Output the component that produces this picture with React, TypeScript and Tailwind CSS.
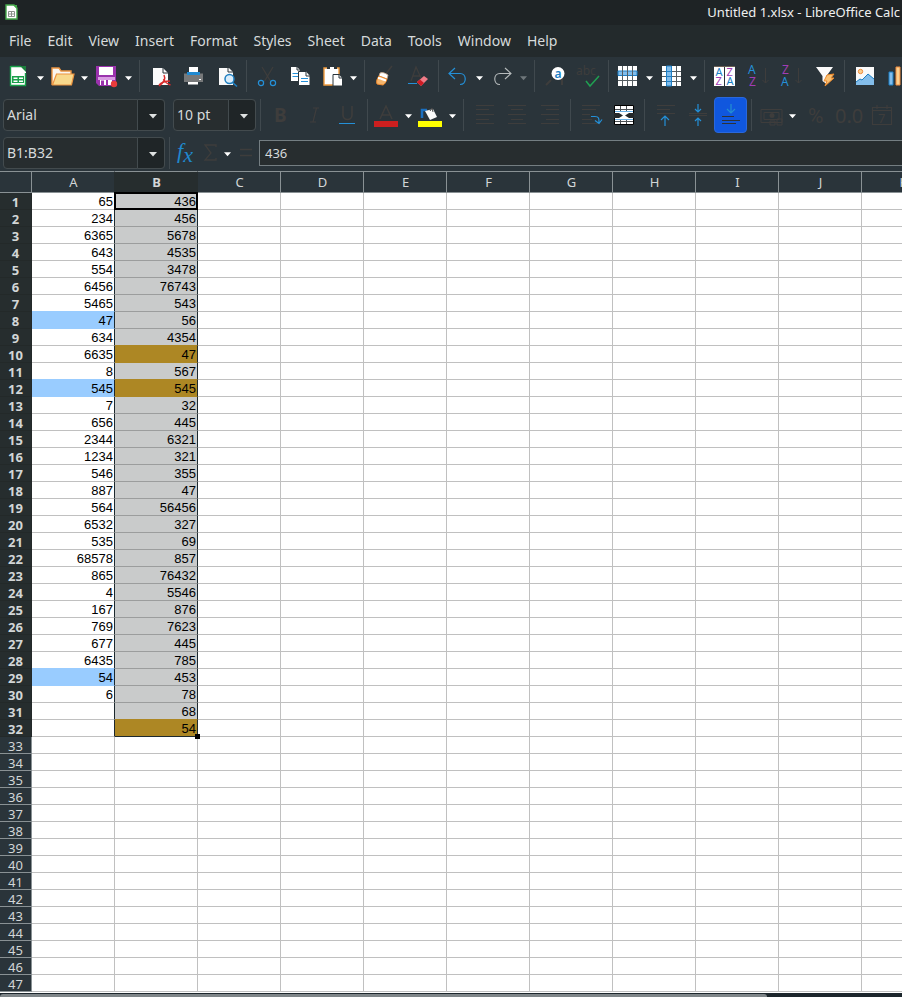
import type { ReactNode } from "react";

const columnA = [
  65, 234, 6365, 643, 554, 6456, 5465, 47, 634, 6635, 8, 545, 7, 656, 2344, 1234, 546, 887, 564, 6532, 535, 68578, 865,
  4, 167, 769, 677, 6435, 54, 6,
];
const columnB = [
  436, 456, 5678, 4535, 3478, 76743, 543, 56, 4354, 47, 567, 545, 32, 445, 6321, 321, 355, 47, 56456, 327, 69, 857,
  76432, 5546, 876, 7623, 445, 785, 453, 78, 68, 54,
];
const blueRows = [8, 12, 29];
const goldRows = [10, 12, 32];
const lastSelected = 32;

const columns = "ABCDEFGHIJK".split("");
const rows = Array.from({ length: 47 }, (_, i) => i + 1);
const menus = ["File", "Edit", "View", "Insert", "Format", "Styles", "Sheet", "Data", "Tools", "Window", "Help"];

const dim = "#3e3d3c";
const blue = "#2490d8";
const purple = "#a13db5";

/* ---------- toolbar parts ---------- */

function Tool({ label, active, children }: { label: string; active?: boolean; children: ReactNode }) {
  return (
    <button
      type="button"
      aria-label={label}
      className={`flex h-9 w-[33px] shrink-0 items-center justify-center rounded-sm ${
        active ? "border border-[#2a68dc] bg-[#1057de]" : ""
      }`}
    >
      <svg width="24" height="24" viewBox="0 0 24 24" fill="none" className="shrink-0 overflow-visible">
        {children}
      </svg>
    </button>
  );
}

function Triangle({ className }: { className: string }) {
  return (
    <svg width="8" height="5" viewBox="0 0 8 5" className={className}>
      <path d="M0 0h8L4 4.6z" fill="currentColor" />
    </svg>
  );
}

function Arrow({ label, muted }: { label: string; muted?: boolean }) {
  return (
    <button type="button" aria-label={label} className="flex h-9 w-[11px] shrink-0 items-center pt-1 pl-px">
      <Triangle className={`w-[7px] shrink-0 ${muted ? "text-[#6f777b]" : "text-white"}`} />
    </button>
  );
}

function Separator() {
  return (
    <div className="flex w-2 shrink-0 justify-center">
      <div className="h-8 w-px bg-[#40494e]" />
    </div>
  );
}

function DropArrow() {
  return (
    <span className="pointer-events-none absolute inset-y-0 right-0 flex w-7 items-center justify-center rounded-r border border-[#434b4e] bg-[#1f2527] pt-1 pl-1">
      <Triangle className="w-[10px] text-[#dfe2e2]" />
    </span>
  );
}

const fieldClass =
  "h-8 w-full appearance-none rounded border border-[#434b4e] bg-[#272d2f] pl-[3px] text-[14px] leading-5 text-[#d6dadb] outline-none";

/* ---------- icons ---------- */

const Lines = ({ paths }: { paths: string }) => <path d={paths} stroke={dim} />;

function StandardToolbar() {
  return (
    <div role="toolbar" aria-label="Standard" className="flex h-[38px] items-center overflow-hidden pl-[3px]">
      <Tool label="New">
        <path d="M2 2h12l4 5v15H2z" fill="#fff" />
        <path d="M2.500 2.500H13M2.500 2v19.500h15V9" stroke="#18a04a" strokeWidth="1.4" />
        <path d="M12 2h6v6z" fill="#1b7f3c" />
        <path d="M4 12h12v7H4z" fill="#18a04a" />
        <path d="M5.5 13.5h4v1.6h-4zM11 13.5h4v1.6h-4zM5.5 16.4h4V18h-4zM11 16.4h4V18h-4z" fill="#fff" />
      </Tool>
      <Arrow label="New options" />
      <Tool label="Open">
        <path d="M0 21V4h7l2 3h10v4" fill="#faf6ef" stroke="#ec9440" strokeWidth="1.4" />
        <path d="M.5 21 4.500 10H22l-2.500 11z" fill="#f8d98c" stroke="#ec9440" strokeWidth="1.2" />
      </Tool>
      <Arrow label="Open options" />
      <Tool label="Save">
        <path d="M0 2h20v20H3l-3-3z" fill="#9a32ad" />
        <path d="M3 3h14v8H3zM4 14h12v7H4z" fill="#fff" />
        <path d="M2 13h17v3H2z" fill="#d99be3" />
        <path d="M5 16h10v5H5z" fill="#fff" />
        <path d="M5 16.500h3V21H5zM10 16h2v5h-2z" fill="#9a32ad" />
        <circle cx="18" cy="20" r="3.200" fill="#e93c3c" />
      </Tool>
      <Arrow label="Save options" />
      <Separator />
      <Tool label="Export as PDF">
        <path d="M5 4h10l5 5v12H5z" fill="#fafafa" />
        <path d="M15 4v5h5" stroke="#2a343a" />
        <path d="M16 11c1.500 3 .5 7-5 11M15.500 15c1.500 3 4 5 7 6M11 21c3-3 7-4 11-4" stroke="#d92b2b" strokeWidth="1.5" />
      </Tool>
      <Tool label="Print">
        <path d="M8 3h9v5H8zM8 15h9v5H8z" fill="#fff" />
        <path d="M3 9.500h19V18H3z" fill="#77797a" />
        <path d="M6 8h13v3H6z" fill="#1f8ad2" />
        <path d="M7 18h10v2.500H7z" fill="#fff" />
        <path d="M18 15.500h2" stroke="#fff" />
      </Tool>
      <Tool label="Print Preview">
        <path d="M5 4h10l4 4v13H5z" fill="#fafafa" />
        <path d="M14 4v4h5" stroke="#2a343a" />
        <circle cx="15.500" cy="15" r="4.500" fill="#d9ecfa" stroke="#1f7fc0" strokeWidth="1.5" />
        <path d="m18.500 18.500 4.500 4" stroke="#1f7fc0" strokeWidth="1.6" />
      </Tool>
      <Separator />
      <Tool label="Cut">
        <path d="m7 3 9 15M18 3 9 18" stroke={dim} strokeWidth="1.3" />
        <circle cx="6" cy="19" r="2.600" stroke={blue} strokeWidth="1.2" />
        <circle cx="18" cy="19" r="2.600" stroke={blue} strokeWidth="1.2" />
      </Tool>
      <Tool label="Copy">
        <path d="M3 3h6l3 3v11H3z" fill="#fff" />
        <path d="M9 3v3h3" stroke="#2a343a" />
        <path d="M4.500 9.500h6M4.500 12.500h6" stroke={blue} />
        <path d="M10.500 7.500h8l3.500 4v10H10.500z" fill="#fff" stroke="#2a343a" />
        <path d="M18 8v4h4" stroke="#2a343a" />
        <path d="M13 14.500h7M13 17.500h7" stroke={blue} />
      </Tool>
      <Tool label="Paste">
        <path d="M3 4h15v17H3z" fill="#fff" stroke="#ef9b3e" strokeWidth="1.4" />
        <path d="M6 3h9v4H6z" fill="#fff" />
        <path d="M6 3h3v2H6zM13 3h3v2h-3z" fill="#2a343a" />
        <path d="M12 10.500h6.500l3 3.500v8H12z" fill="#fff" stroke="#2a343a" />
        <path d="M18 10.500V14h3.500" stroke="#2a343a" />
      </Tool>
      <Arrow label="Paste options" />
      <Separator />
      <Tool label="Clone Formatting">
        <path d="m12 11 7-9" stroke={dim} strokeWidth="1.500" />
        <path d="M7 9c3-1 5 0 8 2l-1 4-8-3z" fill="#fff" stroke="#c7a78b" strokeWidth=".8" />
        <path d="M6 12c3 1 5 2 8 3-1 3-2 5-4 6l-6-1c-1-3 0-5 2-8z" fill="#f5b56b" stroke="#f08c30" />
        <path d="M5 14c3 0 5 2 8 2.500" stroke="#fff" strokeWidth="2" />
      </Tool>
      <Tool label="Clear Direct Formatting">
        <path d="m5 17 5-14 5 11M7 12h7" stroke={dim} strokeWidth="1.3" />
        <path d="M2 19.500h9" stroke={blue} />
        <path d="m11 18 7-6 4 3-7 7z" fill="#f07b87" />
        <path d="m11 18 3-2.500 4 3.500-3 3z" fill="#cf1c24" />
      </Tool>
      <Separator />
      <Tool label="Undo">
        <path d="m8 4-6 5.500 6 5.500M2 9.500h11c7 0 7 11 0 11" stroke={blue} strokeWidth="1.2" />
      </Tool>
      <Arrow label="Undo options" />
      <Tool label="Redo">
        <path d="m14 4 6 5.500-6 5.500M20 9.500H9c-7 0-7 11 0 11" stroke="#b7bcbd" strokeWidth="1.1" />
      </Tool>
      <Arrow label="Redo options" muted />
      <Separator />
      <Tool label="Find and Replace">
        <path d="m8 16-5 5M19 14v7" stroke={dim} strokeWidth="2" />
        <circle cx="15" cy="9.500" r="6.500" fill="#fff" />
        <text x="11.500" y="13.500" fontSize="12" fill="#1b7fc4" fontFamily="Noto Sans" fontWeight="600">a</text>
      </Tool>
      <Tool label="Spelling">
        <text x="0" y="11" fontSize="12" fill={dim} fontFamily="Noto Sans">abc</text>
        <path d="m10 17 4 5 9-10" stroke="#20a052" strokeWidth="1.500" />
      </Tool>
      <Separator />
      <Tool label="Row">
        <path d="M1 2h19v20H1z" fill="#fff" />
        <path d="M1 7h19v4.500H1z" fill="#83bdea" stroke="#1f80c6" />
        <path d="M5.500 2v20M10.500 2v20M15.500 2v20M1 16.500h19" stroke="#555d61" />
      </Tool>
      <Arrow label="Row options" />
      <Tool label="Column">
        <path d="M1 2h19v20H1z" fill="#fff" />
        <path d="M1 7.500h19M1 12.500h19M1 17.500h19M15.500 2v20" stroke="#555d61" />
        <path d="M5.500 2h5v20h-5z" fill="#83bdea" stroke="#1f80c6" />
        <path d="M5.500 7.500h5M5.500 12.500h5M5.500 17.500h5" stroke="#1f80c6" />
      </Tool>
      <Arrow label="Column options" />
      <Separator />
      <Tool label="Sort">
        <path d="M1 3h10v19H1zM12 3h10v19H12z" fill="#fff" />
        <path d="M1 2.500h21" stroke="#6b5f55" />
        <g fontSize="11" fontFamily="Noto Sans">
          <text x="2.500" y="12" fill="#1b7fc4">A</text>
          <text x="2.500" y="21" fill={purple}>Z</text>
          <text x="13.500" y="12" fill={purple}>Z</text>
          <text x="13.500" y="21" fill="#1b7fc4">A</text>
        </g>
      </Tool>
      <Tool label="Sort Ascending">
        <text x="2" y="10" fontSize="12" fill={blue} fontFamily="Noto Sans">A</text>
        <text x="3" y="22" fontSize="12" fill={purple} fontFamily="Noto Sans">Z</text>
        <path d="M19.500 4v15m-3-3 3 3 3-3" stroke={dim} />
      </Tool>
      <Tool label="Sort Descending">
        <text x="3" y="10" fontSize="12" fill={purple} fontFamily="Noto Sans">Z</text>
        <text x="2" y="22" fontSize="12" fill={blue} fontFamily="Noto Sans">A</text>
        <path d="M19.500 4v15m-3-3 3 3 3-3" stroke={dim} />
      </Tool>
      <Tool label="AutoFilter">
        <path d="M4 3h17l-6.500 9v8l-4-3v-5z" fill="#fafafa" />
        <path d="m15 11 7-1-3 4h3l-9 8 2-5h-3z" fill="#f9c072" stroke="#ee8a2b" />
      </Tool>
      <Separator />
      <Tool label="Insert Image">
        <path d="M3 3h18v18H3z" fill="#fafafa" />
        <circle cx="7.500" cy="7.500" r="2.200" fill="#fbd08f" stroke="#ee8a3c" />
        <path d="M3 21v-3l4-3 2 1 6-6 6 5v6z" fill="#83bdea" />
        <path d="m3 18 4-3 2 1 6-6 6 5" stroke="#1b7fc4" />
      </Tool>
      <Tool label="Insert Chart">
        <path d="M3 8h4v13H3z" fill="#83bdea" stroke="#1b7fc4" />
        <path d="M10 3h4v18h-4z" fill="#fbd08f" stroke="#ee8a3c" />
        <path d="M17 11h4v10h-4z" fill="#9bd3a8" stroke="#18a04a" />
      </Tool>
    </div>
  );
}

function FormattingToolbar() {
  return (
    <div role="toolbar" aria-label="Formatting" className="flex h-[39px] items-center overflow-hidden pl-[3px]">
      <div className="relative mr-2 w-[162px] shrink-0">
        <select aria-label="Font Name" className={fieldClass}>
          <option>Arial</option>
        </select>
        <DropArrow />
      </div>
      <div className="relative w-[83px] shrink-0">
        <select aria-label="Font Size" className={fieldClass}>
          <option>10 pt</option>
        </select>
        <DropArrow />
      </div>
      <Separator />
      <Tool label="Bold">
        <text x="5" y="19" fontSize="19" fontWeight="700" fill={dim} fontFamily="Noto Sans">B</text>
      </Tool>
      <Tool label="Italic">
        <path d="M11 5h6M8 19h6M14.500 5 11 19" stroke={dim} strokeWidth="1.2" />
      </Tool>
      <Tool label="Underline">
        <path d="M8 3v9c0 6 9 6 9 0V3" stroke={dim} strokeWidth="1.600" />
        <path d="M4 20.500h16" stroke={blue} />
      </Tool>
      <Separator />
      <Tool label="Font Color">
        <path d="m4 16 6-13 6 13M6 12h8" stroke={dim} strokeWidth="1.500" />
        <path d="M-2 18h24v6H-2z" fill="#cc1f1f" />
      </Tool>
      <Arrow label="Font Color options" />
      <Tool label="Background Color">
        <path d="M2 15V7h5" stroke="#1b6fc0" strokeWidth="2.500" />
        <path d="m5 8 8-2 4 8-7 3z" fill="#fafafa" />
        <path d="m10 8 2-3 1 4" stroke="#4a4a4a" />
        <path d="M-2 18h24v6H-2z" fill="#ffff00" />
      </Tool>
      <Arrow label="Background Color options" />
      <Separator />
      <Tool label="Align Left">
        <Lines paths="M4 2.500h18M4 6.500h13M4 11.500h18M4 16.500h13M4 20.500h18" />
      </Tool>
      <Tool label="Center">
        <Lines paths="M3 2.500h18M6 6.500h12M3 11.500h18M6 16.500h12M3 20.500h18" />
      </Tool>
      <Tool label="Align Right">
        <Lines paths="M3 2.500h18M8 6.500h13M3 11.500h18M8 16.500h13M3 20.500h18" />
      </Tool>
      <Separator />
      <Tool label="Wrap Text">
        <Lines paths="M3 2.500h18M3 6.500h14M3 11.500h8M3 16.500h10M3 20.500h18" />
        <path d="M12 13.500h4c4 0 4 2 4 6m-4-2 4 3 3-4" stroke={blue} strokeWidth="1.2" />
      </Tool>
      <Tool label="Merge Cells">
        <path d="M2.500 2.500h19v19h-19z" fill="#fff" stroke="#000" />
        <path d="M3 6.500h18M3 18.500h18M8.500 3v5M14.500 3v5M8.500 17v4M14.500 17v4" stroke="#4c5154" />
        <path d="M3 8.500h18v8H3z" fill="#fff" />
        <path d="M3 8.500h18M3 16.500h18" stroke="#6ab0e6" />
        <path d="M2 10h5l4 2.500L7 15H2zM22 10h-5l-4 2.500 4 2.500h5z" fill="#25292b" />
      </Tool>
      <Separator />
      <Tool label="Align Top">
        <Lines paths="M4 2.500h18M4 6.500h13M4 10.500h18" />
        <path d="M12 23V13m-4 4 4-4 4 4" stroke={blue} strokeWidth="1.2" />
      </Tool>
      <Tool label="Center Vertically">
        <Lines paths="M3 10.500h18M3 12.500h18" />
        <path d="M12 1v8m-3-3 3 3 3-3M12 23v-8m-3 3 3-3 3 3" stroke={blue} strokeWidth="1.2" />
      </Tool>
      <Tool label="Align Bottom" active>
        <path d="M12 1v9m-4-4 4 4 4-4" stroke="#248fd0" strokeWidth="1.2" />
        <path d="M3 13.500h12M3 17.500h18M3 20.500h14" stroke="#2c3238" />
      </Tool>
      <Separator />
      <Tool label="Format as Currency">
        <path d="M1 6.500h21v13H1zM4 9.500h15v7H4z" stroke={dim} />
        <circle cx="12" cy="12.500" r="2.500" fill={dim} />
        <path d="M10 18h5v4h-5zM17 16h5v6h-5z" stroke={dim} />
      </Tool>
      <Arrow label="Currency options" />
      <Tool label="Format as Percent">
        <text x="4" y="20" fontSize="21" fill={dim} fontFamily="Roboto">%</text>
      </Tool>
      <Tool label="Format as Number">
        <text x="-2" y="20" fontSize="20" fill={dim} fontFamily="Noto Sans">0.0</text>
      </Tool>
      <Tool label="Format as Date">
        <path d="M2.500 4.500h19v17h-19zM2 7.500h20M7 2v4M17 2v4" stroke={dim} strokeWidth="1.200" />
        <text x="8" y="19.500" fontSize="13" fill={dim} fontFamily="Noto Sans">7</text>
      </Tool>
    </div>
  );
}

function FormulaBar() {
  return (
    <div className="flex h-[37px] items-center overflow-hidden pl-[3px]">
      <div className="relative w-[162px] shrink-0">
        <input aria-label="Name Box" defaultValue="B1:B32" className={fieldClass} />
        <DropArrow />
      </div>
      <Separator />
      <button
        type="button"
        aria-label="Function Wizard"
        className="flex h-8 w-6 shrink-0 justify-center font-['Liberation_Serif',serif] text-[22px] leading-7 text-[#2088cc] italic"
      >
        f<span className="pt-1">x</span>
      </button>
      <button type="button" aria-label="Select Function" className="h-8 w-[26px] shrink-0 pl-1">
        <svg width="22" height="24" viewBox="0 0 22 24" fill="none">
          <path d="M15 6V4H4l6 8-6 7h11v-2" stroke={dim} strokeWidth="1.300" />
        </svg>
      </button>
      <Arrow label="Select Function options" />
      <button type="button" aria-label="Formula" className="h-8 w-[25px] shrink-0">
        <svg width="24" height="24" viewBox="0 0 24 24" fill="none">
          <path d="M6 8.500h12M6 14.500h12" stroke={dim} strokeWidth="1.600" />
        </svg>
      </button>
      <input
        aria-label="Input line"
        defaultValue="436"
        className="h-[26px] min-w-0 flex-1 border border-r-0 border-[#747e82] bg-[#272d2f] pl-[5px] text-[13px] leading-5 text-[#d6dadb] outline-none"
      />
    </div>
  );
}

/* ---------- sheet ---------- */

function cellClass(col: string, row: number) {
  const inSelection = row <= lastSelected;
  if (col === "A") {
    const fill = blueRows.includes(row) ? "bg-[#99ccff]" : "bg-white";
    const bottom = blueRows.includes(row) || blueRows.includes(row + 1) ? "border-b-[#99ccff]" : "border-b-[#c0c0c0]";
    return `${fill} ${bottom} ${inSelection ? "border-r-[#1d292e]" : "border-r-[#c0c0c0]"}`;
  }
  if (col === "B" && inSelection) {
    const fill = goldRows.includes(row) ? "bg-[#ad8724]" : "bg-[#c9cbcb]";
    if (row === lastSelected) return `${fill} border-r-[#1d292e] border-b-[#1d292e]`;
    const bottom = goldRows.includes(row) || goldRows.includes(row + 1) ? "border-b-[#ad8724]" : "border-b-[#9b9d9d]";
    return `${fill} ${bottom} border-r-[#1d292e]`;
  }
  return "bg-white border-r-[#c0c0c0] border-b-[#c0c0c0]";
}

function Sheet() {
  return (
    <div className="flex-1 overflow-hidden bg-white pb-px">
      <table className="w-max min-w-full border-separate border-spacing-0">
        <thead>
          <tr className="h-[22px] bg-[#2a343a] text-[13px] leading-5 text-[#d2d6d7]">
            <th className="w-8 min-w-8 border-y border-r border-[#899194] p-0" />
            {columns.map((col) => (
              <th
                key={col}
                scope="col"
                className={`w-[83px] min-w-[83px] border-y border-[#899194] p-0 pl-px ${
                  col === "B" ? "border-r border-r-[#262d2e] bg-[#262d2e] font-bold" : "border-r font-normal"
                } ${col === "A" ? "border-r-[#262d2e]" : ""}`}
              >
                {col}
              </th>
            ))}
          </tr>
        </thead>
        <tbody>
          {rows.map((row) => (
            <tr key={row} className="h-[17px]">
              <th
                scope="row"
                className={`border-r border-b p-0 pt-0.5 text-[13px] leading-[14px] text-[#d2d6d7] ${
                  row <= lastSelected
                    ? "border-[#232929] bg-[#262d2e] font-bold"
                    : "border-[#899194] bg-[#2a343a] font-normal"
                }`}
              >
                {row}
              </th>
              {columns.map((col) => (
                <td
                  key={col}
                  className={`relative border-r border-b p-0 pt-0.5 pr-px text-right font-['Liberation_Sans',sans-serif] text-[13px] leading-[14px] text-black ${cellClass(col, row)}`}
                >
                  {col === "A" && columnA[row - 1]}
                  {col === "B" && columnB[row - 1]}
                  {col === "B" && row === 1 && <span className="absolute -inset-px border-2 border-black" />}
                  {col === "B" && row === lastSelected && (
                    <span className="absolute -right-[3px] -bottom-[3px] z-10 size-[5px] bg-black" />
                  )}
                </td>
              ))}
            </tr>
          ))}
        </tbody>
      </table>
    </div>
  );
}

export default function App() {
  return (
    <div className="flex min-h-screen flex-col overflow-hidden bg-[#2a343a] font-['Noto_Sans',sans-serif]">
      <header className="flex h-[25px] items-center justify-between bg-[#1e2325] pr-0.5 pb-px pl-1">
        <svg width="14" height="16" viewBox="0 0 14 16" fill="none">
          <path d="M2 1h8l3 3v11H2z" fill="#fff" stroke="#45a84b" strokeWidth="1.400" />
          <path d="M9 1h4v4z" fill="#45a84b" />
          <path d="M4.500 7.500h6v5h-6zM7.500 7.500v5M4.500 10h6" stroke="#8b8f8b" />
        </svg>
        <h1 className="text-[13px] leading-5 text-[#eef0f0]">Untitled 1.xlsx - LibreOffice Calc</h1>
      </header>

      <nav className="flex h-8 items-center gap-4 bg-[#232a2c] pl-[9px] text-[14px] leading-5 text-[#d6dadb]">
        {menus.map((menu) => (
          <button key={menu} type="button">
            {menu}
          </button>
        ))}
      </nav>

      <StandardToolbar />
      <FormattingToolbar />
      <FormulaBar />
      <Sheet />

      {/* horizontal scrollbar */}
      <div className="h-1 bg-[#1c262c] pt-px">
        <div className="h-full w-[85%] rounded-t-sm bg-[#7f8689]" />
      </div>
    </div>
  );
}
